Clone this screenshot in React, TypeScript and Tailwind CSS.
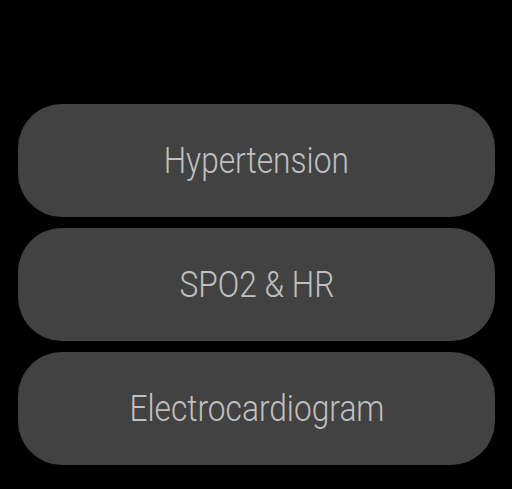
import React from "react";

const items = ["Hypertension", "SPO2 & HR", "Electrocardiogram"];

export default function App() {
  return (
    <div className="w-[512px] h-[489px] bg-black overflow-hidden pt-[104px] pl-[18px]">
      <div className="flex flex-col gap-[11px] w-[477px]">
        {items.map((label) => (
          <button
            key={label}
            type="button"
            className="h-[113px] rounded-[44px] bg-[#424242] text-[#c0c0c0] flex items-center justify-center"
            style={{ fontFamily: "Roboto, sans-serif" }}
          >
            <span className="text-[36px] font-light leading-none scale-x-[0.88] whitespace-nowrap">
              {label}
            </span>
          </button>
        ))}
      </div>
    </div>
  );
}
